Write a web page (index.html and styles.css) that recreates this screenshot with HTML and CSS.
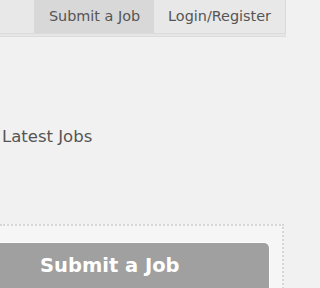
FILE: index.html
```html
<!DOCTYPE html>
<html>
<head>
<meta charset="utf-8">
<link rel="stylesheet" href="styles.css">
</head>
<body>
<header class="topbar">
  <nav class="nav">
    <a class="nav-item active" href="#">Submit a Job</a>
    <a class="nav-item" href="#">Login/Register</a>
  </nav>
</header>
<main class="content">
  <h2 class="section-title">Latest Jobs</h2>
  <div class="cta-box">
    <a class="cta-button" href="#">Submit a Job</a>
  </div>
</main>
</body>
</html>
```
FILE: styles.css
```css
html, body {
  margin: 0;
  padding: 0;
  background: #f1f1f1;
  font-family: "DejaVu Sans", Verdana, sans-serif;
  overflow: hidden;
  height: 288px;
}
.topbar {
  background: #e8e8e8;
  width: 285px;
  height: 33px;
  border-bottom: 1px solid #dadada;
  border-right: 1px solid #d8d8d8;
  box-shadow: 0 2px 0 #e6e6e6, 0 3px 0 #dcdcdc;
  display: flex;
  justify-content: flex-end;
}
.nav {
  display: flex;
  height: 100%;
}
.nav-item {
  display: flex;
  align-items: center;
  padding: 0 14px 1px 14px;
  color: #555;
  font-size: 14.4px;
  text-decoration: none;
}
.nav-item.active {
  background: #d8d8d8;
  padding: 0 14px 1px 15px;
}
.content {
  padding-top: 93px;
}
.section-title {
  margin: 0 0 0 2px;
  font-size: 16.5px;
  font-weight: normal;
  color: #555;
  line-height: 20px;
}
.cta-box {
  margin-top: 77px;
  width: 282px;
  height: 62px;
  border-top: 2px dotted #d6d6d6;
  border-right: 2px dotted #d6d6d6;
  background: #f6f6f6;
  padding-top: 17px;
}
.cta-button {
  display: block;
  width: 229px;
  height: 45px;
  padding-left: 40px;
  background: #a0a0a0;
  border-radius: 0 5px 0 0;
  color: #fff;
  font-weight: bold;
  font-size: 19.5px;
  line-height: 46px;
  text-decoration: none;
  box-shadow: 0 0 0 1px #fcfcfc;
}
```
